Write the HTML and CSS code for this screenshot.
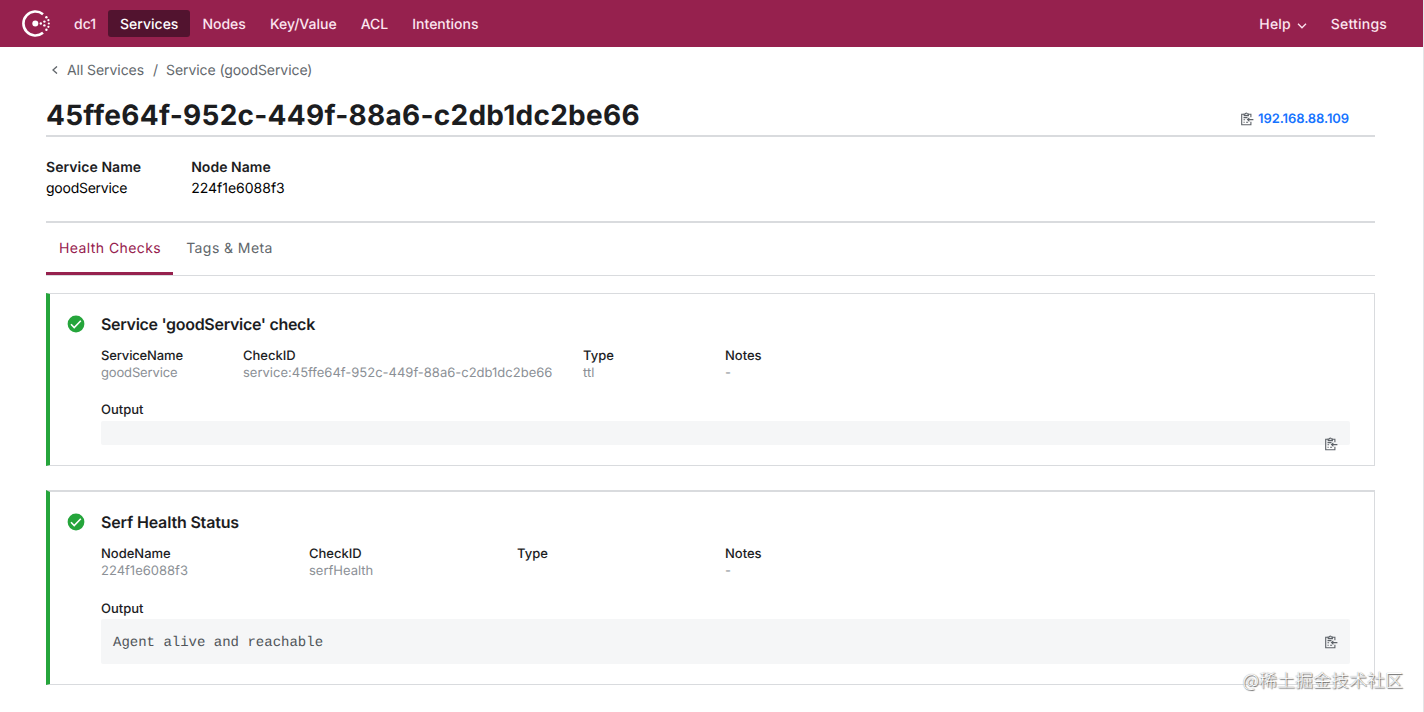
FILE: index.html
```html
<!DOCTYPE html>
<html lang="en">
  <head>
    <meta charset="UTF-8" />
    <meta name="viewport" content="width=device-width, initial-scale=1.0" />
    <title>Consul</title>
    <link rel="stylesheet" href="styles.css">
  </head>
  <body>
    <!-- shared icons -->
    <svg class="sprite" width="0" height="0">
      <symbol id="icon-copy" viewBox="0 0 14 14">
        <path d="M4.2 2.2H1.7v10.6h9.2V9.8M8.4 2.2h2.5v3" />
        <path d="M4.2 3.6V2h1.1C5.3.7 7.3.7 7.3 2h1.1v1.6z" />
        <path d="M3.5 5.6h4M3.5 7.8h1.6M3.5 10.2h1.2M6.1 10.2h2" />
        <path d="M13.4 7.6H7.6M9.4 5.8L7.5 7.6l1.9 1.8" />
      </symbol>
      <symbol id="icon-check" viewBox="0 0 18 18">
        <circle cx="9" cy="9" r="8.4" fill="#25a53b" />
        <path d="M4 9.3l3.2 3.2 6.6-6.7" fill="none" stroke="#fff" stroke-width="1.6" />
      </symbol>
    </svg>

    <header>
      <svg class="logo" viewBox="0 0 28 28">
        <path d="M21 4.2A12 12 0 1 0 21 22.8" fill="none" stroke="#fff" stroke-width="2.6" />
        <g fill="#fff">
          <circle cx="13.3" cy="13.5" r="3" />
          <circle cx="18.8" cy="13.5" r="1.2" />
          <circle cx="22.4" cy="11.6" r="1.2" />
          <circle cx="22.4" cy="15.4" r="1.2" />
          <circle cx="26.4" cy="10.2" r="1.1" />
          <circle cx="26.8" cy="13.5" r="1.1" />
          <circle cx="26.4" cy="16.8" r="1.1" />
          <circle cx="24.4" cy="7.2" r="1.2" />
          <circle cx="24.4" cy="19.8" r="1.2" />
        </g>
      </svg>
      <nav class="main-nav">
        <a>dc1</a>
        <a class="active">Services</a>
        <a>Nodes</a>
        <a>Key/Value</a>
        <a>ACL</a>
        <a>Intentions</a>
      </nav>
      <nav class="side-nav">
        <a>Help <svg class="caret" viewBox="0 0 10 6"><path d="M1 .8l4 4 4-4" /></svg></a>
        <a>Settings</a>
      </nav>
    </header>

    <main>
      <div class="breadcrumbs">
        <svg class="back" viewBox="0 0 6 8"><path d="M5 .4L1 4l4 3.6" /></svg>
        <a>All Services</a>
        <span class="sep">/</span>
        <a>Service (goodService)</a>
      </div>

      <div class="title-bar">
        <h1>45ffe64f-952c-449f-88a6-c2db1dc2be66</h1>
        <div class="address">
          <svg class="copy"><use href="#icon-copy" /></svg>
          <a>192.168.88.109</a>
        </div>
      </div>

      <dl class="summary">
        <div>
          <dt>Service Name</dt>
          <dd>goodService</dd>
        </div>
        <div>
          <dt>Node Name</dt>
          <dd>224f1e6088f3</dd>
        </div>
      </dl>

      <div class="tabs">
        <a class="selected">Health Checks</a>
        <a>Tags &amp; Meta</a>
      </div>

      <section class="check">
        <svg class="status"><use href="#icon-check" /></svg>
        <div class="check-body">
          <h2>Service 'goodService' check</h2>
          <dl class="details service">
            <div><dt>ServiceName</dt><dd>goodService</dd></div>
            <div><dt>CheckID</dt><dd>service:45ffe64f-952c-449f-88a6-c2db1dc2be66</dd></div>
            <div><dt>Type</dt><dd>ttl</dd></div>
            <div><dt>Notes</dt><dd>-</dd></div>
          </dl>
          <h3>Output</h3>
          <div class="output empty">
            <svg class="copy"><use href="#icon-copy" /></svg>
          </div>
        </div>
      </section>

      <section class="check serf">
        <svg class="status"><use href="#icon-check" /></svg>
        <div class="check-body">
          <h2>Serf Health Status</h2>
          <dl class="details">
            <div><dt>NodeName</dt><dd>224f1e6088f3</dd></div>
            <div><dt>CheckID</dt><dd>serfHealth</dd></div>
            <div><dt>Type</dt><dd></dd></div>
            <div><dt>Notes</dt><dd>-</dd></div>
          </dl>
          <h3>Output</h3>
          <div class="output">
            <pre>Agent alive and reachable</pre>
            <svg class="copy"><use href="#icon-copy" /></svg>
          </div>
        </div>
      </section>
    </main>

    <div class="watermark">@稀土掘金技术社区</div>
  </body>
</html>
```
FILE: styles.css
```css
:root {
  --brand: #96214e;
  --line: #d9dbde;
  --text: #1c1d1f;
  --muted: #8b9096;
  --green: #25a53b;
}

* {
  box-sizing: border-box;
}

body {
  margin: 0;
  height: 712px;
  font-family: Inter, sans-serif;
  font-size: 14px;
  color: var(--text);
  background: #fff;
  border-right: 1px solid #e4e5e7;
  overflow: hidden;
  text-rendering: geometricPrecision;
}

h1,
h2,
h3,
dl,
dd,
pre {
  margin: 0;
}

.sprite {
  position: absolute;
}

header {
  display: flex;
  align-items: center;
  height: 47px;
  padding: 0 24px 0 22px;
  background: var(--brand);
  color: #fce5f0;
  font-weight: 500;
}

.logo {
  width: 28px;
  height: 28px;
  margin-right: 12px;
}

.main-nav,
.side-nav {
  display: flex;
}

.main-nav {
  letter-spacing: 0;
}

.side-nav {
  margin-left: auto;
  letter-spacing: 0.2px;
}

header a {
  height: 27px;
  padding: 0 12px;
  line-height: 29px;
  border-radius: 3px;
}

header a.active {
  background: #52132f;
  color: #fff;
}

.caret {
  width: 10px;
  height: 6px;
  margin-left: 2px;
  fill: none;
  stroke: currentColor;
  stroke-width: 1.3;
}

main {
  padding: 0 48px 0 46px;
}

.breadcrumbs {
  display: flex;
  align-items: center;
  height: 46px;
  padding-left: 6px;
  color: #62676c;
  letter-spacing: -0.07px;
}

.breadcrumbs a,
.sep {
  padding-top: 1px;
}

.back {
  width: 6px;
  height: 8px;
  margin-right: 9px;
  fill: none;
  stroke: currentColor;
  stroke-width: 1.3;
}

.sep {
  margin: 0 8px 0 9px;
}

.title-bar {
  display: flex;
  justify-content: space-between;
  height: 44px;
  padding-right: 26px;
  border-bottom: 2px solid var(--line);
}

h1 {
  font-size: 28px;
  line-height: 44px;
  font-weight: 700;
  letter-spacing: 0.25px;
}

.address {
  display: flex;
  align-items: center;
  gap: 4px;
  height: 51px;
  font-size: 13px;
  font-weight: 600;
  letter-spacing: -0.1px;
  color: #1573ff;
}

.copy {
  width: 14px;
  height: 14px;
  fill: none;
  stroke: #5d6268;
  stroke-width: 1.1;
}

.summary {
  display: flex;
  gap: 50px;
  height: 86px;
  padding-top: 20px;
  line-height: 21px;
  border-bottom: 2px solid var(--line);
}

.summary dt {
  font-weight: 600;
  letter-spacing: 0.05px;
}

.summary dd {
  color: #000;
}

.summary div:first-child dd {
  letter-spacing: -0.25px;
}

.tabs {
  display: flex;
  height: 53px;
  border-bottom: 1px solid var(--line);
  letter-spacing: 0.42px;
}

.tabs a {
  height: 52px;
  padding: 0 13px;
  line-height: 52px;
  color: #62676c;
}

.tabs a.selected {
  padding-right: 12px;
  color: var(--brand);
  border-bottom: 3px solid var(--brand);
}

.check {
  display: flex;
  height: 173px;
  margin-top: 17px;
  padding: 20px 24px 0 17px;
  border: 1px solid var(--line);
  border-left: 4px solid var(--green);
}

.check.serf {
  height: 195px;
  margin-top: 24px;
  border-top-width: 2px;
}

.status {
  width: 18px;
  height: 18px;
  margin: 1px 16px 0 0;
}

.check-body {
  flex: 1;
}

h2 {
  font-size: 16px;
  line-height: 21px;
  font-weight: 600;
  letter-spacing: -0.3px;
}

.serf h2 {
  letter-spacing: -0.17px;
}

.details {
  display: grid;
  grid-template-columns: 208px 208px 208px 1fr;
  height: 55px;
  margin-top: 13px;
  font-size: 13px;
  line-height: 17px;
}

.details.service {
  grid-template-columns: 142px 340px 142px 1fr;
  height: 54px;
}

.details dt,
h3 {
  font-size: 13px;
  font-weight: 500;
  line-height: 17px;
}

.details dd {
  color: var(--muted);
}

.details.service div:first-child {
  letter-spacing: -0.15px;
}

.output {
  display: flex;
  align-items: center;
  justify-content: space-between;
  height: 45px;
  margin-top: 1px;
  padding: 0 12px;
  background: #f5f6f7;
  border-radius: 2px;
}

.output.empty {
  height: 24px;
  margin-top: 2px;
  align-items: flex-start;
  justify-content: flex-end;
}

.output.empty .copy {
  margin-top: 16px;
  flex-shrink: 0;
}

.output pre {
  padding-top: 2px;
  font-family: "Courier New", "Liberation Mono", monospace;
  font-size: 14px;
  color: #50555a;
}

/* sits over the bottom right corner of the page */
.watermark {
  position: absolute;
  right: 21px;
  bottom: 19px;
  font-family: "Noto Sans CJK SC", sans-serif;
  font-size: 18px;
  font-weight: 300;
  line-height: 26px;
  color: #fff;
  text-shadow: 1px 1px 1px #666, 0 0 1px #888;
}
```
